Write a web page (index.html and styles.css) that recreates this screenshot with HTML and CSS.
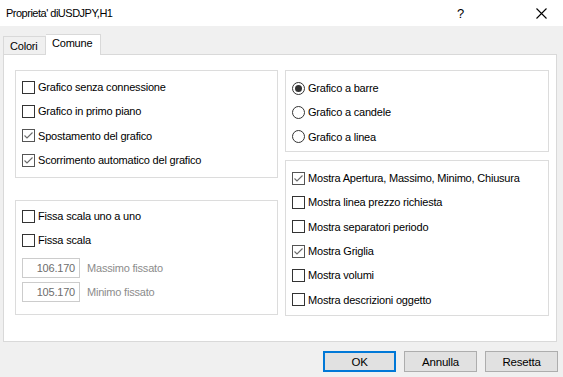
FILE: index.html
```html
<!DOCTYPE html>
<html lang="it">
<head>
    <meta charset="UTF-8">
    <title>Proprieta' diUSDJPY,H1</title>
    <link rel="stylesheet" href="styles.css">
</head>
<body>

<div class="dialog">
    <div class="titlebar">
        <span class="title">Proprieta' diUSDJPY,H1</span>
        <span class="help">?</span>
        <span class="close">
            <svg width="11" height="11" viewBox="0 0 11 11"><path d="M0.5 0.5 L10.5 10.5 M10.5 0.5 L0.5 10.5" stroke="#000" stroke-width="1.1" fill="none"/></svg>
        </span>
    </div>

    <div class="tabs">
        <div class="tab">Colori</div>
        <div class="tab active">Comune</div>
    </div>

    <div class="panel">
        <div class="column">
            <div class="group group-chart">
                <label class="row"><span class="box"></span>Grafico senza connessione</label>
                <label class="row"><span class="box"></span>Grafico in primo piano</label>
                <label class="row"><span class="box checked"><svg width="11" height="11" viewBox="0 0 11 11"><path d="M1.5 5.5 L4 8 L9.5 2.5" stroke="#6a6a6a" stroke-width="1.1" fill="none"/></svg></span>Spostamento del grafico</label>
                <label class="row"><span class="box checked"><svg width="11" height="11" viewBox="0 0 11 11"><path d="M1.5 5.5 L4 8 L9.5 2.5" stroke="#6a6a6a" stroke-width="1.1" fill="none"/></svg></span>Scorrimento automatico del grafico</label>
            </div>
            <div class="group group-scale">
                <label class="row"><span class="box"></span>Fissa scala uno a uno</label>
                <label class="row"><span class="box"></span>Fissa scala</label>
                <div class="field"><span class="input">106.170</span><span class="hint">Massimo fissato</span></div>
                <div class="field"><span class="input">105.170</span><span class="hint">Minimo fissato</span></div>
            </div>
        </div>
        <div class="column">
            <div class="group group-type">
                <label class="row"><span class="radio on"></span>Grafico a barre</label>
                <label class="row"><span class="radio"></span>Grafico a candele</label>
                <label class="row"><span class="radio"></span>Grafico a linea</label>
            </div>
            <div class="group group-show">
                <label class="row"><span class="box checked"><svg width="11" height="11" viewBox="0 0 11 11"><path d="M1.5 5.5 L4 8 L9.5 2.5" stroke="#6a6a6a" stroke-width="1.1" fill="none"/></svg></span>Mostra Apertura, Massimo, Minimo, Chiusura</label>
                <label class="row"><span class="box"></span>Mostra linea prezzo richiesta</label>
                <label class="row"><span class="box"></span>Mostra separatori periodo</label>
                <label class="row"><span class="box checked"><svg width="11" height="11" viewBox="0 0 11 11"><path d="M1.5 5.5 L4 8 L9.5 2.5" stroke="#6a6a6a" stroke-width="1.1" fill="none"/></svg></span>Mostra Griglia</label>
                <label class="row"><span class="box"></span>Mostra volumi</label>
                <label class="row"><span class="box"></span>Mostra descrizioni oggetto</label>
            </div>
        </div>
    </div>

    <div class="buttons">
        <button class="btn default">OK</button>
        <button class="btn">Annulla</button>
        <button class="btn">Resetta</button>
    </div>
</div>

</body>
</html>
```

FILE: styles.css
```css
body {
    margin: 0;
    font-family: "Liberation Sans", Arial, sans-serif;
    font-size: 11px;
    letter-spacing: -0.2px;
    color: #000;
    background-color: #f0f0f0;
}
.dialog {
    width: 563px;
    height: 377px;
    display: flex;
    flex-direction: column;
}
.titlebar {
    height: 26px;
    background: white;
    display: flex;
    align-items: center;
}
.title {
    flex: 1;
    padding-left: 6px;
    font-size: 11px;
    letter-spacing: -0.5px;
}
.help {
    width: 14px;
    margin-right: 65px;
    font-size: 13px;
}
.close {
    width: 11px;
    height: 11px;
    margin-right: 16px;
    display: flex;
}
.tabs {
    display: flex;
    align-items: flex-end;
    margin-top: 8px;
    padding-left: 3px;
    height: 20px;
    position: relative;
    z-index: 1;
}
.tab {
    height: 17px;
    padding: 0 0 0 6px;
    border: 1px solid #d9d9d9;
    border-bottom: none;
    background: #f0f0f0;
    line-height: 19px;
    width: 35px;
}
.tab.active {
    height: 20px;
    width: 48px;
    background: white;
    border-left: none;
    line-height: 17px;
    margin-bottom: -1px;
}
.panel {
    height: 271px;
    margin: 0 6px 0 3px;
    background: white;
    border: 1px solid #d9d9d9;
    padding: 15px 7px 0 11px;
    display: grid;
    grid-template-columns: 263px 264px;
    column-gap: 7px;
}
.column {
    display: flex;
    flex-direction: column;
}
.group {
    border: 1px solid #dcdcdc;
    padding: 4px 0 0 6px;
    box-sizing: border-box;
}
.group-chart {
    height: 108px;
}
.group-scale {
    height: 115px;
    margin-top: 22px;
    padding-top: 3px;
}
.group-type {
    height: 82px;
    padding-top: 5px;
}
.group-show {
    height: 156px;
    margin-top: 8px;
    padding-top: 5px;
}
.row {
    display: flex;
    align-items: center;
    height: 24.3px;
    white-space: nowrap;
}
.box {
    width: 11px;
    height: 11px;
    border: 1px solid #333;
    margin-right: 3px;
    display: flex;
    flex-shrink: 0;
}
.box.checked {
    border-color: #555;
}
.radio {
    width: 11px;
    height: 11px;
    border: 1px solid #333;
    border-radius: 50%;
    margin-right: 3px;
    display: flex;
    align-items: center;
    justify-content: center;
    flex-shrink: 0;
}
.radio.on::after {
    content: "";
    width: 7px;
    height: 7px;
    border-radius: 50%;
    background: #333;
}
.field {
    display: flex;
    align-items: center;
    margin-top: 5px;
}
.field + .field {
    margin-top: 4px;
}
.input {
    width: 52px;
    height: 18px;
    border: 1px solid #cccccc;
    padding-right: 4px;
    text-align: right;
    line-height: 18px;
    color: #6d6d6d;
}
.hint {
    margin-left: 7px;
    color: #8c8c8c;
}
.buttons {
    display: flex;
    justify-content: flex-end;
    gap: 8px;
    margin-top: 9px;
    padding-right: 5px;
}
.btn {
    width: 73px;
    height: 21px;
    font-family: "Liberation Sans", Arial, sans-serif;
    font-size: 11.5px;
    letter-spacing: -0.2px;
    background: #e1e1e1;
    border: 1px solid #adadad;
    padding: 0;
}
.btn.default {
    border: 2px solid #0078d7;
}
```
